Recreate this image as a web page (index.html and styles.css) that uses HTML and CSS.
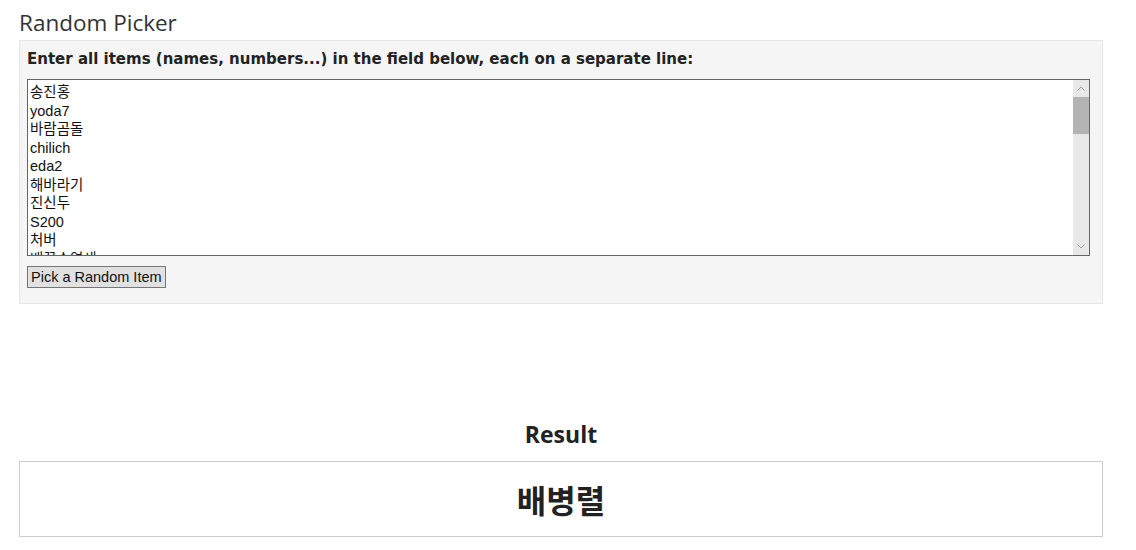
FILE: index.html
```html
<!DOCTYPE html>
<html lang="ko">
<head>
  <meta charset="UTF-8" />
  <meta name="viewport" content="width=device-width, initial-scale=1.0"/>
  <title>Random Picker</title>
  <link rel="stylesheet" href="styles.css">
</head>
<body>
  <div class="page">
    <h1 class="title">Random Picker</h1>

    <div class="panel">
      <label for="items">Enter all items (names, numbers...) in the field below, each on a separate line:</label>
      <div class="field">
        <textarea id="items" rows="9">송진홍
yoda7
바람곰돌
chilich
eda2
해바라기
진신두
S200
처버
배꼽수염새
배병렬
kimjh
달빛소나타
minsu82
하늘바라기
parkdw
초록나무
jaylee
별빛가득
hong99
은하수
dongwoo
푸른바다
sky_k
산들바람
leeyoon
코스모스
ohmin
바다사자
jjang
무지개
taehee
햇살가득
cho21
들국화
seojin
바람개비
namgil
구름빵
yuna</textarea>
        <div class="scrollbar" aria-hidden="true">
          <svg class="arrow" width="16" height="17" viewBox="0 0 16 17"><path d="M4.5 10.5 L8 7 L11.5 10.5" fill="none" stroke="#a0a0a0" stroke-width="1"/></svg>
          <div class="thumb"></div>
          <div class="track"></div>
          <svg class="arrow" width="16" height="17" viewBox="0 0 16 17"><path d="M4.5 6.5 L8 10 L11.5 6.5" fill="none" stroke="#a0a0a0" stroke-width="1"/></svg>
        </div>
      </div>
      <button class="pick" onclick="pick()">Pick a Random Item</button>
    </div>

    <h2 class="result-title">Result</h2>
    <div class="result" id="result">배병렬</div>
  </div>

  <script>
    function pick() {
      const items = document.getElementById("items").value
        .split("\n").map(s => s.trim()).filter(s => s);
      if (!items.length) return;
      document.getElementById("result").innerText = items[Math.floor(Math.random() * items.length)];
    }
  </script>
</body>
</html>
```

FILE: styles.css
```css
body {
  margin: 0;
  padding: 0;
  background: #fff;
  color: #222;
  font-family: "Open Sans", "Noto Sans", "Noto Sans CJK KR", sans-serif;
}
.page {
  width: 1084px;
  margin-left: 19px;
}
.title {
  margin: 8px 0 2px;
  font-size: 22.5px;
  font-weight: 400;
  line-height: 30px;
  color: #333;
}
.panel {
  background: #f5f5f5;
  border: 1px solid #e6e6e6;
  padding: 9px 12px 15px 7px;
}
.panel label {
  display: block;
  font-family: "DejaVu Sans", Verdana, sans-serif;
  font-weight: 700;
  font-size: 15px;
  line-height: 18px;
  color: #222;
  margin-bottom: 11px;
}
.field {
  position: relative;
}
textarea {
  display: block;
  width: 100%;
  height: 177px;
  box-sizing: border-box;
  margin: 0;
  padding: 3px 20px 2px 2px;
  border: 1px solid #666;
  border-radius: 0;
  font-family: "Liberation Sans", Arial, "Noto Sans CJK KR", sans-serif;
  font-size: 14.5px;
  line-height: 18.5px;
  color: #111;
  resize: none;
  background: #fff;
  overflow-y: hidden;
}
.scrollbar {
  position: absolute;
  top: 1px;
  right: 1px;
  bottom: 1px;
  width: 16px;
  background: #e8e8e8;
  display: flex;
  flex-direction: column;
}
.scrollbar .arrow {
  display: block;
  flex: none;
}
.scrollbar .thumb {
  height: 37px;
  background: #b4b4b4;
  flex: none;
}
.scrollbar .track {
  flex: 1;
}
.pick {
  display: block;
  margin-top: 10px;
  padding: 2px 3px;
  border: 1px solid #767676;
  border-radius: 0;
  background: #e1e1e1;
  font-family: "Liberation Sans", Arial, sans-serif;
  font-size: 14.5px;
  color: #111;
  cursor: pointer;
}
.result-title {
  margin: 115px 0 12px;
  text-align: center;
  font-size: 23px;
  font-weight: 700;
  line-height: 30px;
  color: #222;
}
.result {
  border: 1px solid #ccc;
  height: 74px;
  display: flex;
  align-items: center;
  justify-content: center;
  font-family: "Noto Sans CJK KR", sans-serif;
  font-size: 32px;
  font-weight: 700;
  color: #222;
}
```
